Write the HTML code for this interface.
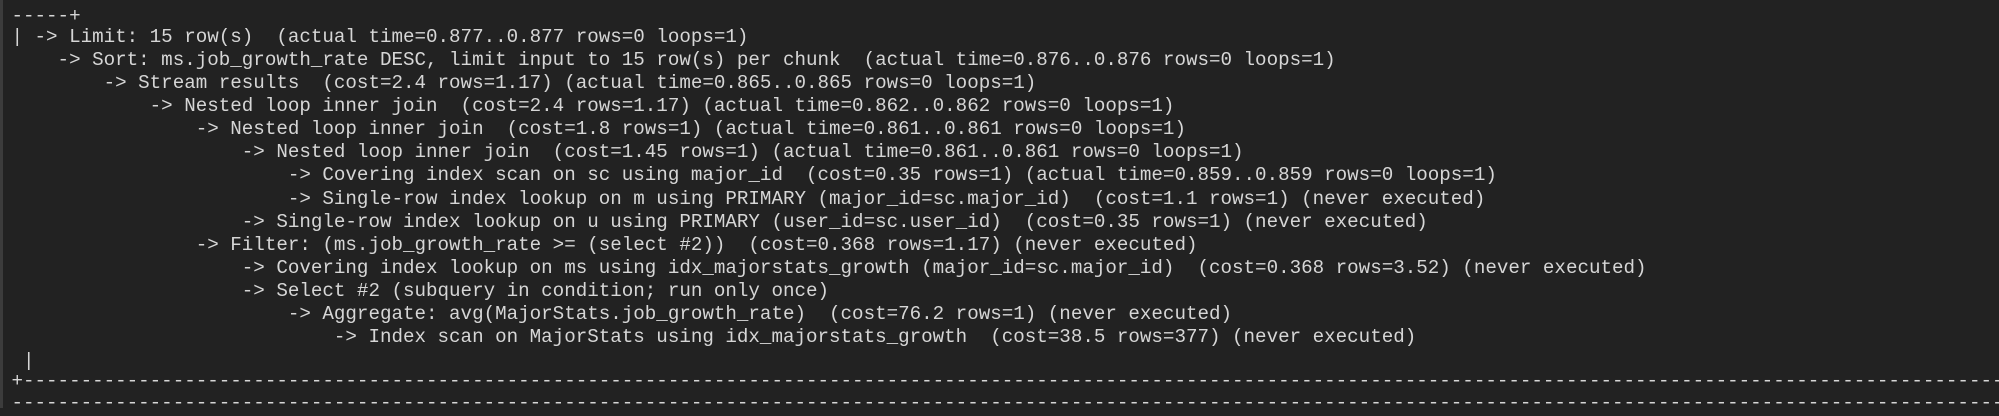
<!DOCTYPE html>
<html><head><meta charset="utf-8"><style>
html,body{margin:0;padding:0;}
body{width:1999px;height:408px;background:#222222;overflow:hidden;position:relative;border-left:3px solid #3c3c3c;box-sizing:border-box;}
.l{position:absolute;left:8.5px;height:25px;line-height:25px;font-family:"Liberation Mono",monospace;font-size:19.2px;color:#d6d6d6;white-space:pre;}
.d{right:0;overflow:hidden;}
</style></head><body>
<div class="l" style="top:4px">-----+</div>
<div class="l" style="top:24.5px">| -&gt; Limit: 15 row(s)  (actual time=0.877..0.877 rows=0 loops=1)</div>
<div class="l" style="top:47.65px">    -&gt; Sort: ms.job_growth_rate DESC, limit input to 15 row(s) per chunk  (actual time=0.876..0.876 rows=0 loops=1)</div>
<div class="l" style="top:70.8px">        -&gt; Stream results  (cost=2.4 rows=1.17) (actual time=0.865..0.865 rows=0 loops=1)</div>
<div class="l" style="top:93.95px">            -&gt; Nested loop inner join  (cost=2.4 rows=1.17) (actual time=0.862..0.862 rows=0 loops=1)</div>
<div class="l" style="top:117.1px">                -&gt; Nested loop inner join  (cost=1.8 rows=1) (actual time=0.861..0.861 rows=0 loops=1)</div>
<div class="l" style="top:140.25px">                    -&gt; Nested loop inner join  (cost=1.45 rows=1) (actual time=0.861..0.861 rows=0 loops=1)</div>
<div class="l" style="top:163.4px">                        -&gt; Covering index scan on sc using major_id  (cost=0.35 rows=1) (actual time=0.859..0.859 rows=0 loops=1)</div>
<div class="l" style="top:186.55px">                        -&gt; Single-row index lookup on m using PRIMARY (major_id=sc.major_id)  (cost=1.1 rows=1) (never executed)</div>
<div class="l" style="top:209.7px">                    -&gt; Single-row index lookup on u using PRIMARY (user_id=sc.user_id)  (cost=0.35 rows=1) (never executed)</div>
<div class="l" style="top:232.85px">                -&gt; Filter: (ms.job_growth_rate &gt;= (select #2))  (cost=0.368 rows=1.17) (never executed)</div>
<div class="l" style="top:256px">                    -&gt; Covering index lookup on ms using idx_majorstats_growth (major_id=sc.major_id)  (cost=0.368 rows=3.52) (never executed)</div>
<div class="l" style="top:279.15px">                    -&gt; Select #2 (subquery in condition; run only once)</div>
<div class="l" style="top:302.3px">                        -&gt; Aggregate: avg(MajorStats.job_growth_rate)  (cost=76.2 rows=1) (never executed)</div>
<div class="l" style="top:325.45px">                            -&gt; Index scan on MajorStats using idx_majorstats_growth  (cost=38.5 rows=377) (never executed)</div>
<div class="l" style="top:348.5px"> |</div>
<div class="l d" style="top:368.5px">+------------------------------------------------------------------------------------------------------------------------------------------------------------------------------------</div>
<div class="l d" style="top:390.5px">-------------------------------------------------------------------------------------------------------------------------------------------------------------------------------------</div>
</body></html>
